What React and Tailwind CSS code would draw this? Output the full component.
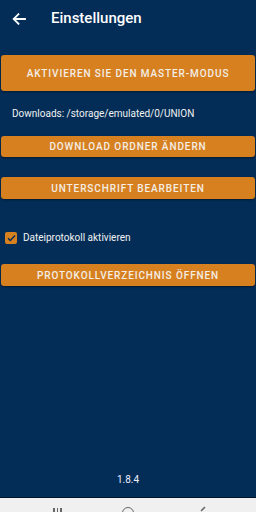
import React from "react";

function Btn({ children, className = "" }) {
  return (
    <div
      className={`mx-[1px] flex items-center justify-center rounded-[3px] bg-[#d78020] text-[10px] font-medium tracking-[0.9px] text-[#f3eee6] shadow-[0_1px_2px_rgba(0,0,0,0.45)] ${className}`}
    >
      {children}
    </div>
  );
}

export default function App() {
  return (
    <div
      className="flex h-[512px] w-[256px] flex-col overflow-hidden bg-[#032d57] text-white"
      style={{ fontFamily: "Roboto, 'Noto Sans', sans-serif" }}
    >
      <div className="flex h-[37px] items-center">
        <svg width="14" height="12" viewBox="0 0 14 12" className="ml-[12px]">
          <path d="M13 6H2M6.5 1.2L1.7 6l4.8 4.8" stroke="white" strokeWidth="1.8" fill="none" strokeLinecap="square" />
        </svg>
        <span className="ml-[25px] text-[15px] font-medium leading-none">Einstellungen</span>
      </div>
      <Btn className="mt-[18px] h-[36px]">AKTIVIEREN SIE DEN MASTER-MODUS</Btn>
      <div className="mt-[16px] h-[14px] pl-[12px] text-[10px] leading-[14px] text-[#f1f1f1]">
        Downloads: /storage/emulated/0/UNION
      </div>
      <Btn className="mt-[15px] h-[21px]">DOWNLOAD ORDNER ÄNDERN</Btn>
      <Btn className="mt-[20px] h-[22px]">UNTERSCHRIFT BEARBEITEN</Btn>
      <div className="mt-[32px] flex h-[13px] items-center">
        <div className="ml-[5px] flex h-[12px] w-[12px] items-center justify-center rounded-[2px] bg-[#d78020]">
          <svg width="9" height="8" viewBox="0 0 9 8">
            <path d="M1 4.2l2.3 2.3L8 1.5" stroke="#032d57" strokeWidth="1.4" fill="none" />
          </svg>
        </div>
        <span className="ml-[6px] text-[10px] leading-none text-[#f1f1f1]">Dateiprotokoll aktivieren</span>
      </div>
      <Btn className="mt-[20px] h-[22px]">PROTOKOLLVERZEICHNIS ÖFFNEN</Btn>
      <div className="flex-1" />
      <div className="mb-[11px] text-center text-[10px] leading-[12px] text-[#eef]">1.8.4</div>
      <div className="h-[1px] bg-[#001428]" />
      <div className="relative h-[14px] bg-[#f0f0f0]">
        <div className="absolute left-[53px] top-[10px] flex gap-[2px]">
          <div className="h-[6px] w-[1.5px] bg-[#666]" />
          <div className="h-[6px] w-[1.5px] bg-[#666]" />
          <div className="h-[6px] w-[1.5px] bg-[#666]" />
        </div>
        <div className="absolute left-[122px] top-[9px] h-[12px] w-[12px] rounded-full border-[1.5px] border-[#666]" />
        <svg className="absolute left-[199px] top-[8px]" width="8" height="8" viewBox="0 0 8 8">
          <path d="M6 1L2 5" stroke="#666" strokeWidth="1.5" fill="none" />
        </svg>
      </div>
    </div>
  );
}
